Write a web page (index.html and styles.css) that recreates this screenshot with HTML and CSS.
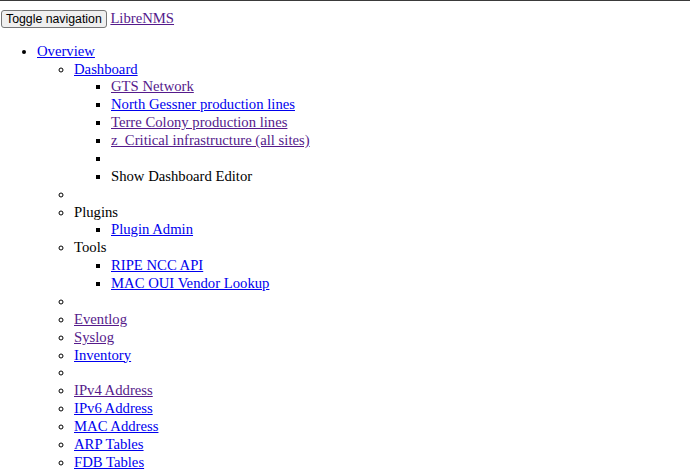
FILE: index.html
```html
<!DOCTYPE html>
<html>
<head>
<meta charset="utf-8">
<title>LibreNMS</title>
<link rel="stylesheet" href="styles.css">
</head>
<body>
<nav class="navbar">
<div class="navbar-header"><button type="button" class="toggle">Toggle navigation</button> <a class="brand visited" href="#">LibreNMS</a></div>
<ul class="menu">
<li><a class="link" href="#">Overview</a>
<ul>
<li><a class="link" href="#">Dashboard</a>
<ul>
<li><a class="visited" href="#">GTS Network</a></li>
<li><a class="link" href="#">North Gessner production lines</a></li>
<li><a class="visited" href="#">Terre Colony production lines</a></li>
<li><a class="visited" href="#">z_Critical infrastructure (all sites)</a></li>
<li class="divider"></li>
<li>Show Dashboard Editor</li>
</ul>
</li>
<li class="divider"></li>
<li>Plugins
<ul>
<li><a class="link" href="#">Plugin Admin</a></li>
</ul>
</li>
<li>Tools
<ul>
<li><a class="link" href="#">RIPE NCC API</a></li>
<li><a class="link" href="#">MAC OUI Vendor Lookup</a></li>
</ul>
</li>
<li class="divider"></li>
<li><a class="visited" href="#">Eventlog</a></li>
<li><a class="visited" href="#">Syslog</a></li>
<li><a class="link" href="#">Inventory</a></li>
<li class="divider"></li>
<li><a class="visited" href="#">IPv4 Address</a></li>
<li><a class="link" href="#">IPv6 Address</a></li>
<li><a class="link" href="#">MAC Address</a></li>
<li><a class="link" href="#">ARP Tables</a></li>
<li><a class="link" href="#">FDB Tables</a></li>
</ul>
</li>
</ul>
</nav>
</body>
</html>
```
FILE: styles.css
```css
html {
  border-top: 1px solid #3a3a3a;
}
body {
  margin: 8px 0;
  font-family: "Liberation Serif", "Times New Roman", serif;
  font-size: 14.7px;
  line-height: 17.87px;
  color: #000;
  background: #fff;
}
.navbar-header {
  line-height: 18px;
}
.toggle {
  font-family: "Liberation Sans", Arial, sans-serif;
  font-size: 12.3px;
  line-height: 14px;
  padding: 1px 4px;
  margin: 0 0 0 1px;
  color: #000;
  background: #efefef;
  border: 1px solid #767676;
  border-radius: 3px;
  vertical-align: baseline;
}
.link {
  color: #0000ee;
}
.visited {
  color: #551a8b;
}
.menu {
  margin: 14.7px 0;
}
ul {
  padding-left: 37px;
}
```
